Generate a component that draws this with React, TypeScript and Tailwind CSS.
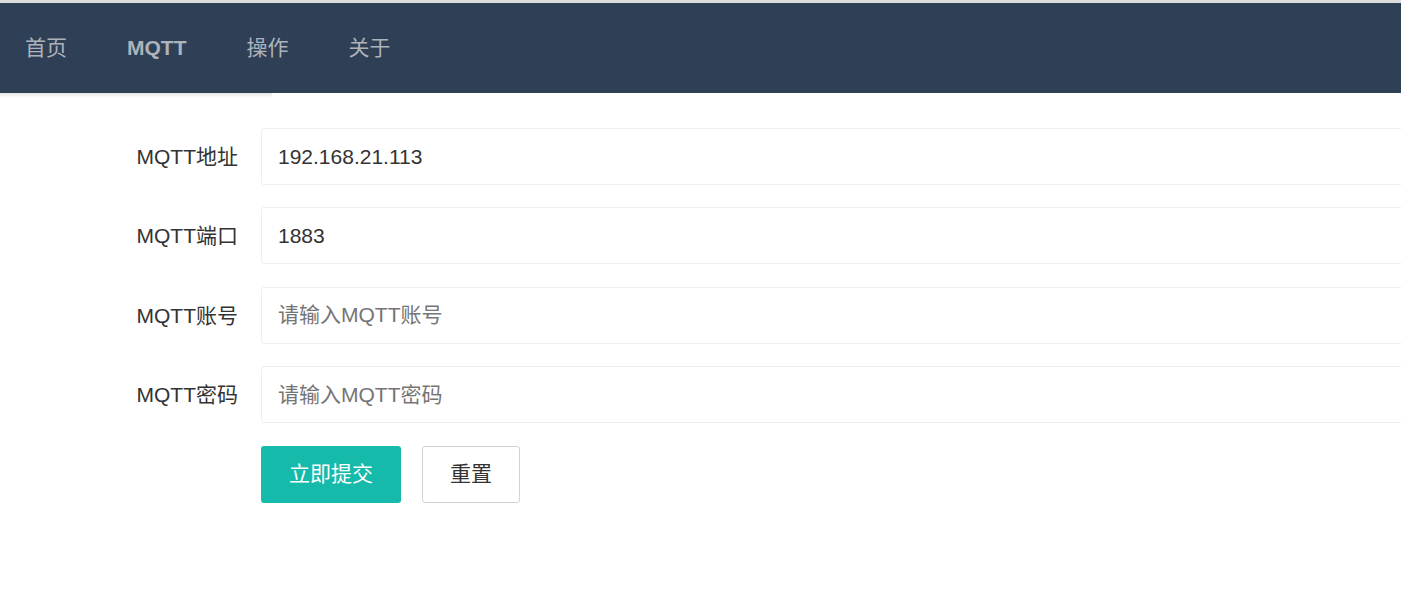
const NAV = ['首页', 'MQTT', '操作', '关于']

const FIELDS = [
  { label: 'MQTT地址', value: '192.168.21.113', placeholder: '请输入MQTT地址' },
  { label: 'MQTT端口', value: '1883', placeholder: '请输入MQTT端口' },
  { label: 'MQTT账号', value: '', placeholder: '请输入MQTT账号' },
  { label: 'MQTT密码', value: '', placeholder: '请输入MQTT密码' },
]

function App(){
  return <div className="h-[597px] w-full overflow-hidden bg-white text-[21px] text-[#333] [font-family:'Liberation_Sans','Noto_Sans_CJK_SC',sans-serif]">
    <div className="h-[3px] bg-[#dcdcdc]"></div>

    <div className="relative">
      <ul className="flex h-[90px] items-center gap-[60px] bg-[#2f4056] pb-[2px] pl-[25px]">
        {
          NAV.map((name, index)=>{
            return <li key={index} className={`leading-none text-[#aeb3bb] ${name === 'MQTT' ?'font-bold' :''}`}>{name}</li>
          })
        }
      </ul>
      {/* nav bar hover line */}
      <div className="absolute left-0 top-[90px] h-[5px] w-[272px] bg-gradient-to-b from-[#e4e4e4] to-transparent"></div>
    </div>

    <form className="w-[1700px] pt-[35px]" onSubmit={(e)=>e.preventDefault()}>
      {
        FIELDS.map((field, index)=>{
          return <div key={index} className="mb-[22.4px] flex items-center">
            <label className="w-[261px] shrink-0 pr-[23px] text-right leading-none">{field.label}</label>
            <input
              className="h-[57px] flex-1 rounded-[3px] border border-[#eee] px-[16px] text-[21px] text-[#333] outline-none placeholder:text-[#757575]"
              defaultValue={field.value}
              placeholder={field.placeholder} />
          </div>
        })
      }
      <div className="flex gap-[21px] pl-[261px]">
        <button type="submit" className="h-[57px] w-[140px] rounded-[3px] bg-[#16baaa] text-[21px] text-white">立即提交</button>
        <button type="reset" className="h-[57px] w-[98px] rounded-[3px] border border-[#d2d2d2] bg-white text-[21px] text-[#333]">重置</button>
      </div>
    </form>
  </div>
}

export default App
